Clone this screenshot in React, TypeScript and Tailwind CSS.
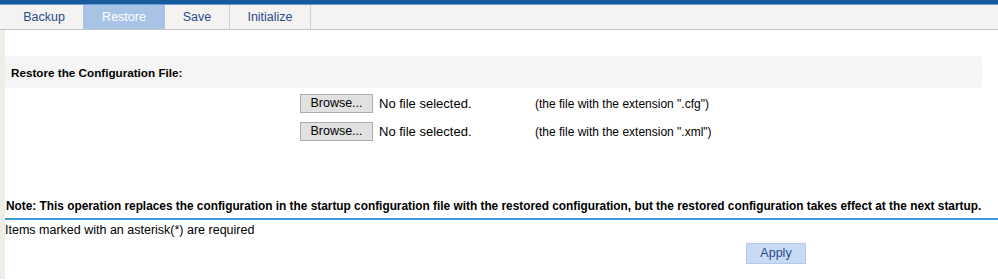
import React from 'react';

const tabs = [
  { label: 'Backup', w: 'w-[78px]', active: false, sep: false },
  { label: 'Restore', w: 'w-[82px]', active: true, sep: false },
  { label: 'Save', w: 'w-[65px]', active: false, sep: true },
  { label: 'Initialize', w: 'w-[81px]', active: false, sep: true },
];

function FileRow({ hint }: { hint: string }) {
  return (
    <div className="flex items-center h-[19px]">
      <div className="w-[295px]" />
      <button className="w-[73px] h-[19px] bg-[#e1e1e1] border border-[#adadad] text-[12.5px] text-black leading-none">
        Browse...
      </button>
      <span className="ml-[6px] w-[156px] text-[13px] text-black">No file selected.</span>
      <span className="text-[12px] text-black">{hint}</span>
    </div>
  );
}

export default function App() {
  return (
    <div className="w-[998px] h-[280px] bg-white overflow-hidden font-['Liberation_Sans',Arial,sans-serif]">
      <div className="h-[4px] bg-[#175a9e]" />
      <div className="h-[1px] bg-[#6d9bd0]" />
      <div className="flex h-[25px] bg-[#f4f3f1] border-b border-[#c4c4c4] pl-[5px]">
        {tabs.map((t) => (
          <div
            key={t.label}
            className={`${t.w} flex items-center justify-center text-[12.5px] ${
              t.active ? 'bg-[#a9c3e7] text-white' : 'text-[#2b4a8b]'
            } ${t.sep ? 'border-r border-[#d2d2d2]' : ''}`}
          >
            {t.label}
          </div>
        ))}
      </div>
      <div className="flex h-[249px]">
        <div className="w-[5px] bg-[#efede8]" />
        <div className="flex-1 flex flex-col">
          <div className="h-[26px]" />
          <div className="w-[977px] h-[32px] bg-[#f5f5f5] rounded-[2px] flex items-center pl-[6px] pt-[1px]">
            <span className="text-[11.7px] font-bold text-black">Restore the Configuration File:</span>
          </div>
          <div className="h-[6px]" />
          <FileRow hint={'(the file with the extension ".cfg")'} />
          <div className="h-[9px]" />
          <FileRow hint={'(the file with the extension ".xml")'} />
          <div className="h-[54px]" />
          <div className="h-[23px] flex items-center pl-[1px]">
            <span className="text-[11.85px] font-bold text-black whitespace-nowrap">
              Note: This operation replaces the configuration in the startup configuration file with the restored
              configuration, but the restored configuration takes effect at the next startup.
            </span>
          </div>
          <div className="h-[2px] bg-[#3c9bd8]" />
          <div className="h-[20px] flex items-center">
            <span className="text-[12.5px] text-black">Items marked with an asterisk(*) are required</span>
          </div>
          <div className="h-[3px]" />
          <div className="flex">
            <div className="w-[741px]" />
            <button className="w-[60px] h-[21px] bg-[#c9daf4] border border-[#b3caea] text-[12.5px] text-[#2b4a8b]">
              Apply
            </button>
          </div>
        </div>
      </div>
    </div>
  );
}
